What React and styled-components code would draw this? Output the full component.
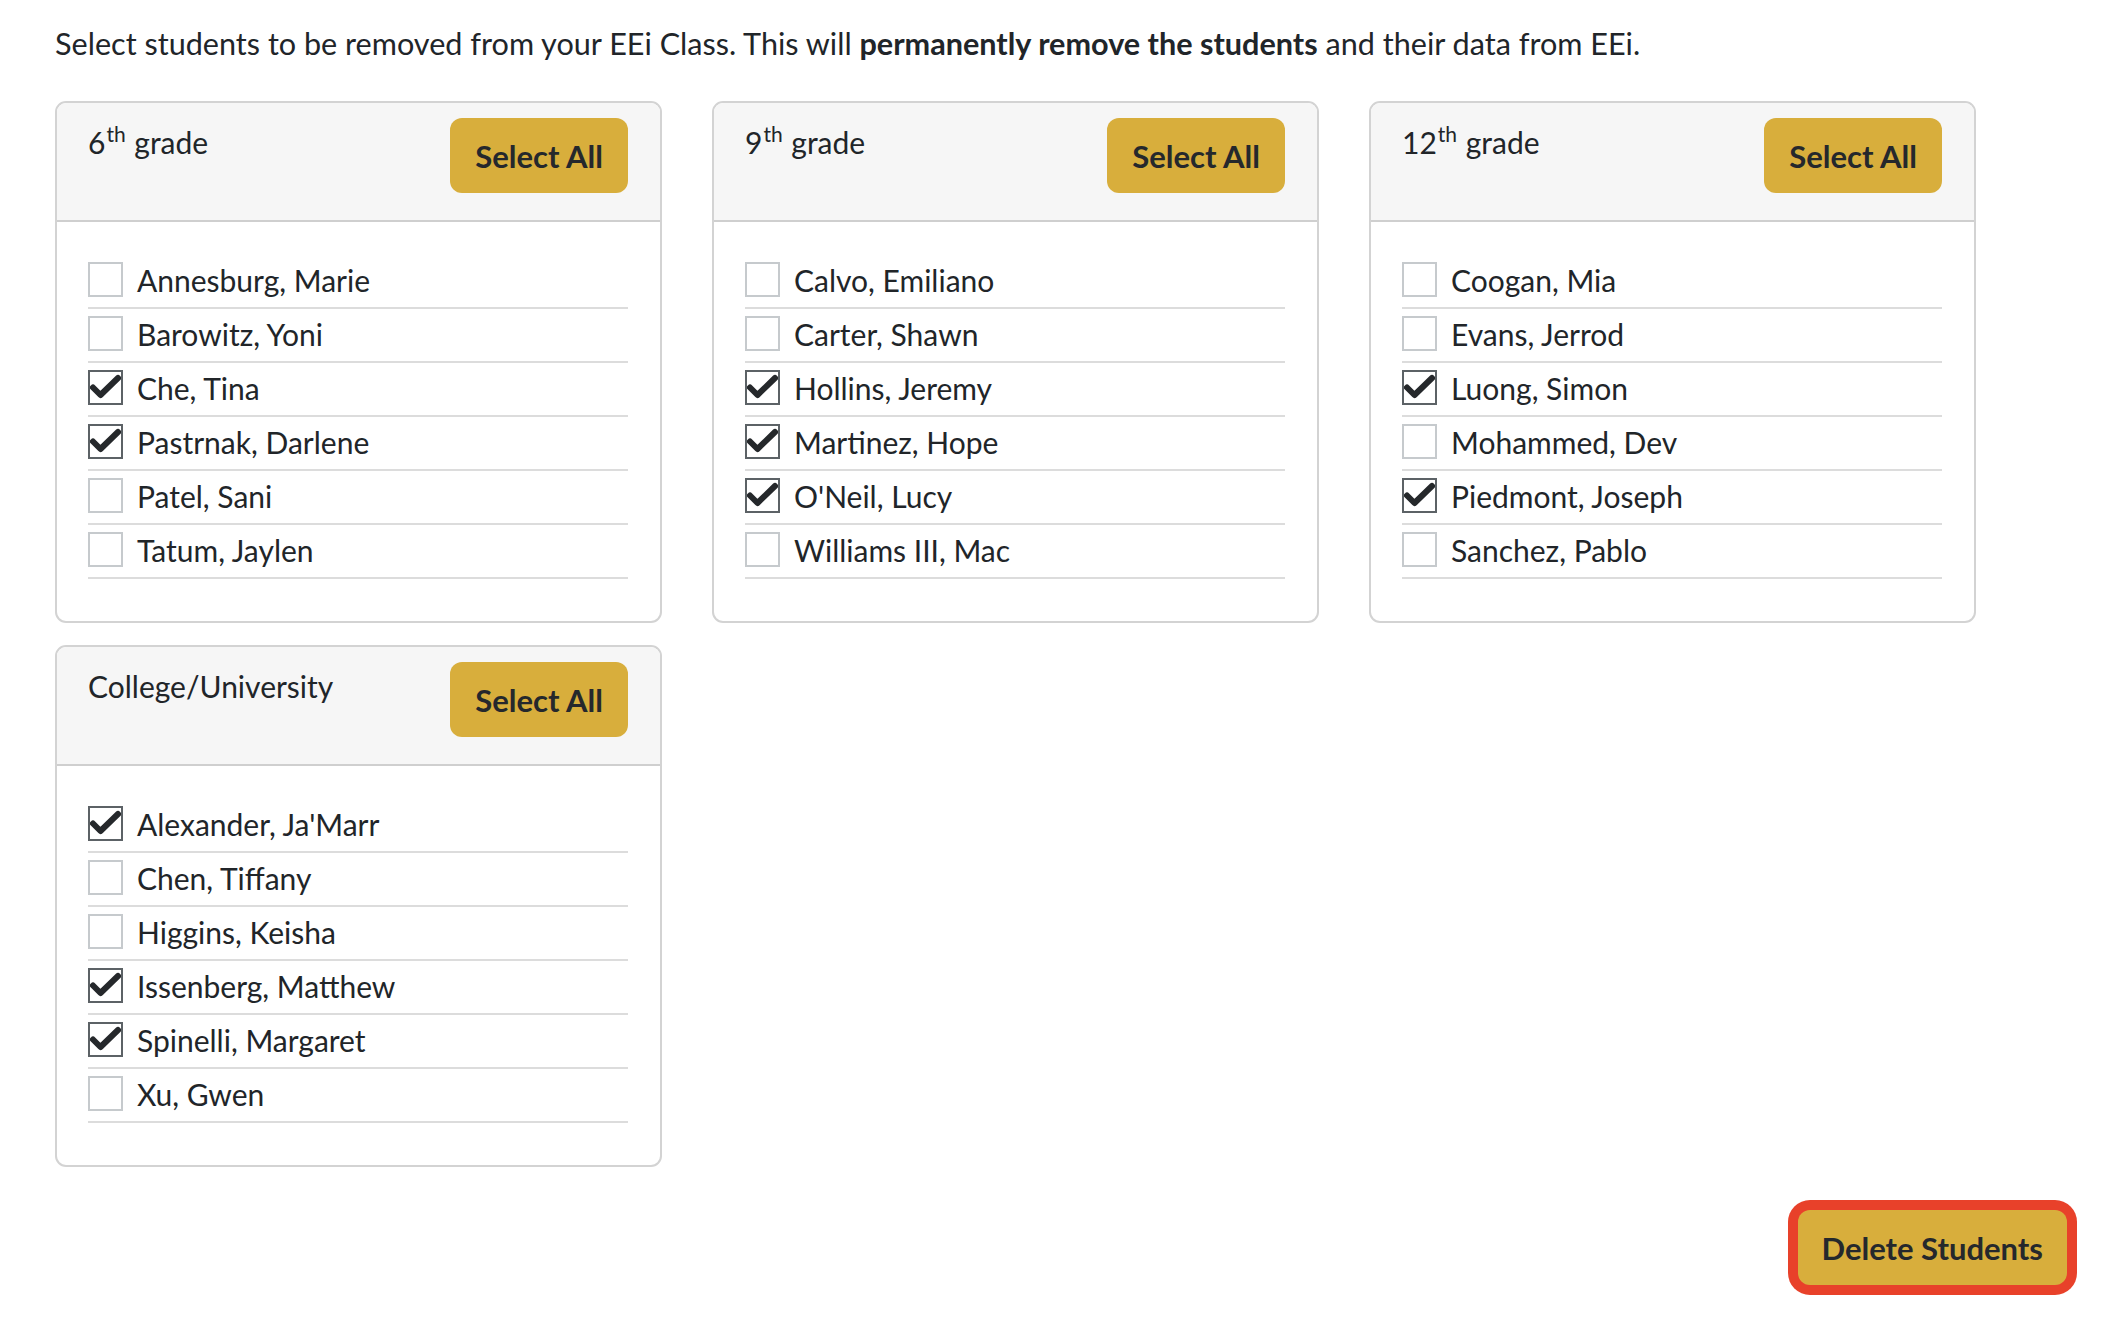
import React from "react";
import styled, { createGlobalStyle } from "styled-components";

const GlobalStyle = createGlobalStyle`
  html, body { margin: 0; padding: 0; background: #ffffff; }
  body {
    font-family: Lato, "Open Sans", "Liberation Sans", sans-serif;
    color: #212529;
  }
`;

const Page = styled.div`
  padding: 26px 59px 30px 55px;
  font-size: 30px;
`;

const Intro = styled.p`
  margin: 0 0 39px 0;
  line-height: 36px;
  font-size: 30.6px;
  b { font-weight: 700; }
`;

const Grid = styled.div`
  display: grid;
  grid-template-columns: repeat(3, 607px);
  column-gap: 50px;
  row-gap: 22px;
  align-items: start;
`;

const Card = styled.section`
  border: 2px solid #d3d3d3;
  border-radius: 11px;
  overflow: hidden;
  background: #fff;
`;

const CardHeader = styled.div`
  display: flex;
  justify-content: space-between;
  align-items: flex-start;
  background: #f6f6f6;
  border-bottom: 2px solid #cfcfcf;
  padding: 15px 32px 27px 31px;
`;

const Heading = styled.h3`
  margin: 0;
  padding-top: 6px;
  font-size: 30px;
  font-weight: 400;
  line-height: 36px;
  sup {
    font-size: 21px;
    line-height: 0;
    vertical-align: 0;
    position: relative;
    top: -12px;
    margin-left: 1px;
    margin-right: 1px;
  }
`;

const GoldButton = styled.button`
  font-family: inherit;
  font-weight: 700;
  font-size: 31px;
  color: #25282c;
  background: #d8ae3c;
  border: none;
  border-radius: 12px;
  height: 75px;
  padding: 0 ${(p) => p.$padX || 25}px;
  cursor: pointer;
  box-shadow: ${(p) => (p.$focused ? "0 0 0 10px #e8412a" : "none")};
`;

const List = styled.ul`
  list-style: none;
  margin: 0;
  padding: 33px 32px 42px 31px;
`;

const Row = styled.li`
  display: flex;
  align-items: flex-start;
  border-bottom: 2px solid #dcdcdc;
  padding-bottom: 2px;
  height: 50px;
`;

const Box = styled.span`
  flex: none;
  width: 35px;
  height: 35px;
  box-sizing: border-box;
  margin-top: 7px;
  margin-right: 14px;
  border: 2px solid ${(p) => (p.$checked ? "#5c6266" : "#c6cacd")};
  background: #fff;
  display: flex;
  align-items: center;
  justify-content: center;
  svg { display: block; }
`;

const Name = styled.span`
  font-size: 30px;
  line-height: 50px;
`;

const Footer = styled.div`
  display: flex;
  justify-content: flex-end;
  margin-top: 43px;
`;

const Check = () => (
  <svg width="31" height="31" viewBox="0 0 31 31">
    <polyline
      points="3,15.5 10.5,23 28,6"
      fill="none"
      stroke="#25282b"
      strokeWidth="6"
      strokeLinecap="round"
      strokeLinejoin="round"
    />
  </svg>
);

const groups = [
  {
    title: "6",
    sup: "th",
    rest: "grade",
    students: [
      ["Annesburg, Marie", false],
      ["Barowitz, Yoni", false],
      ["Che, Tina", true],
      ["Pastrnak, Darlene", true],
      ["Patel, Sani", false],
      ["Tatum, Jaylen", false],
    ],
  },
  {
    title: "9",
    sup: "th",
    rest: "grade",
    students: [
      ["Calvo, Emiliano", false],
      ["Carter, Shawn", false],
      ["Hollins, Jeremy", true],
      ["Martinez, Hope", true],
      ["O'Neil, Lucy", true],
      ["Williams III, Mac", false],
    ],
  },
  {
    title: "12",
    sup: "th",
    rest: "grade",
    students: [
      ["Coogan, Mia", false],
      ["Evans, Jerrod", false],
      ["Luong, Simon", true],
      ["Mohammed, Dev", false],
      ["Piedmont, Joseph", true],
      ["Sanchez, Pablo", false],
    ],
  },
  {
    title: "College/University",
    students: [
      ["Alexander, Ja'Marr", true],
      ["Chen, Tiffany", false],
      ["Higgins, Keisha", false],
      ["Issenberg, Matthew", true],
      ["Spinelli, Margaret", true],
      ["Xu, Gwen", false],
    ],
  },
];

export default function App() {
  return (
    <>
      <GlobalStyle />
      <Page>
        <Intro>
          Select students to be removed from your EEi Class. This will{" "}
          <b>permanently remove the students</b> and their data from EEi.
        </Intro>
        <Grid>
          {groups.map((g) => (
            <Card key={g.title}>
              <CardHeader>
                <Heading>
                  {g.title}
                  {g.sup && <sup>{g.sup}</sup>}
                  {g.rest && ` ${g.rest}`}
                </Heading>
                <GoldButton type="button">Select All</GoldButton>
              </CardHeader>
              <List>
                {g.students.map(([name, checked]) => (
                  <Row key={name}>
                    <Box $checked={checked}>{checked && <Check />}</Box>
                    <Name>{name}</Name>
                  </Row>
                ))}
              </List>
            </Card>
          ))}
        </Grid>
        <Footer>
          <GoldButton type="button" $focused $padX={24}>
            Delete Students
          </GoldButton>
        </Footer>
      </Page>
    </>
  );
}
